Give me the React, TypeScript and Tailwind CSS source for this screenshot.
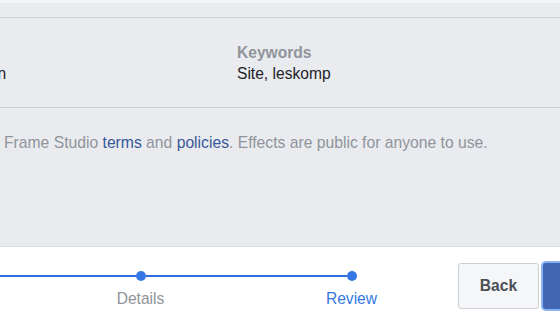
const steps = [
  { label: 'Effect', active: false, lineLeft: false, lineRight: true },
  { label: 'Details', active: false, lineLeft: true, lineRight: true },
  { label: 'Review', active: true, lineLeft: true, lineRight: false },
]

const Field = ({ label, value }: { label: string; value: string }) => (
  <div className="flex flex-col">
    <span className="font-bold text-[#90949c] leading-[21px]">{label}</span>
    <span className="text-[#1d2129] leading-[21px] whitespace-nowrap">{value}</span>
  </div>
)

const Stepper = () => (
  <div className="flex -ml-[176px] mt-[8px]">
    {steps.map((step) => (
      <div key={step.label} className="w-[211px] flex flex-col items-center">
        <div className="w-full flex items-center h-[10px]">
          <div className={`flex-1 h-[2px] ${step.lineLeft ? 'bg-[#2f6fdb]' : ''}`} />
          <div className="w-[10px] h-[10px] rounded-full bg-[#3578e5]" />
          <div className={`flex-1 h-[2px] ${step.lineRight ? 'bg-[#2f6fdb]' : ''}`} />
        </div>
        <span
          className={`mt-[7px] leading-[21px] ${step.active ? 'text-[#3578e5]' : 'text-[#90949c]'}`}
        >
          {step.label}
        </span>
      </div>
    ))}
  </div>
)

export default function App() {
  return (
    <div className="w-[560px] h-[325px] overflow-hidden bg-white text-[15.6px] font-['Liberation_Sans',Arial,sans-serif]">
      <div className="h-[3px] bg-[#f3f4f6]" />
      <div className="bg-[#e9ebee] border-b border-[#dddfe2] h-[244px]">
        <div className="h-[14px]" />
        <div className="border-y border-[#ccd0d5] h-[91px] flex items-center">
          <div className="flex -ml-[123px]">
            <div className="w-[360px]">
              <Field label="Name" value="Spring Celebration" />
            </div>
            <Field label="Keywords" value="Site, leskomp" />
          </div>
        </div>
        <p className="pl-[4px] pt-[24px] leading-[21px] text-[15.7px] text-[#90949c] whitespace-nowrap">
          Frame Studio <span className="text-[#365899]">terms</span> and{' '}
          <span className="text-[#385898]">policies</span>. Effects are public for anyone to use.
        </p>
      </div>
      <div className="flex items-start pt-[16px]">
        <div className="w-[458px] shrink-0">
          <Stepper />
        </div>
        <div className="flex gap-[4px] shrink-0">
          <button className="w-[81px] h-[46px] rounded-[3px] border border-[#ccd0d5] bg-[#f5f6f7] font-bold text-[#4b4f56]">
            Back
          </button>
          <button className="w-[90px] h-[46px] rounded-[3px] bg-[#4267b2] ring-2 ring-[#8ab0f5] font-bold text-white">
            Publish
          </button>
        </div>
      </div>
    </div>
  )
}
